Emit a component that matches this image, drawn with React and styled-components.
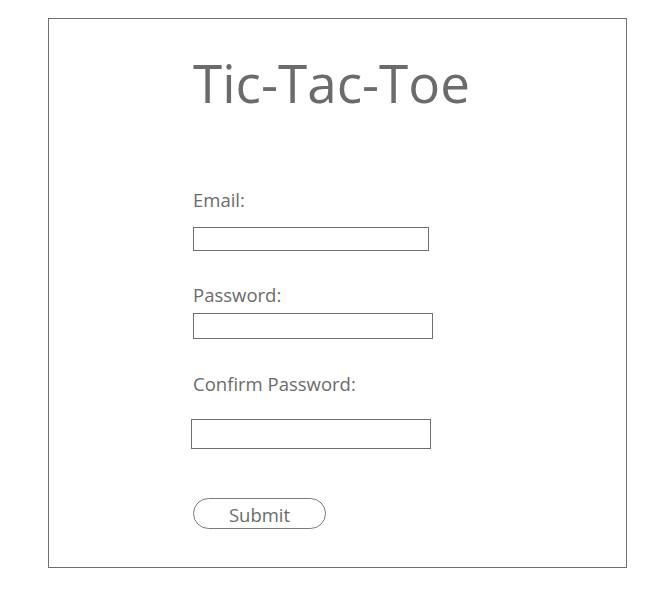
import styled, { createGlobalStyle } from "styled-components";

const GlobalStyle = createGlobalStyle`
  body {
    margin: 0;
    background: #ffffff;
    font-family: "Open Sans", "Noto Sans", sans-serif;
  }
`;

const Frame = styled.div`
  box-sizing: border-box;
  width: 579px;
  height: 550px;
  margin: 18px 0 0 48px;
  border: 1px solid #6f6f6f;
  padding: 33px 0 0 144px;
`;

const Title = styled.h1`
  margin: 0;
  font-size: 53px;
  line-height: 62px;
  font-weight: 400;
  color: #6b6b6b;
`;

const Form = styled.form`
  display: flex;
  flex-direction: column;
  align-items: flex-start;
  margin-top: 74px;
`;

const Label = styled.label`
  display: block;
  font-size: 18.5px;
  line-height: 24px;
  color: #6b6b6b;
  margin-top: ${(p) => p.$top || 0}px;
`;

const Field = styled.input`
  box-sizing: border-box;
  display: block;
  width: ${(p) => p.$w}px;
  height: ${(p) => p.$h}px;
  margin: ${(p) => p.$top}px 0 0 ${(p) => p.$shift || 0}px;
  border: 1px solid #6f6f6f;
  border-radius: 0;
  background: #ffffff;
  padding: 0 4px;
  outline: none;
`;

const SubmitButton = styled.button`
  box-sizing: border-box;
  width: 133px;
  height: 31px;
  margin-top: 49px;
  border: 1px solid #7a7a7a;
  border-radius: 16px;
  background: #ffffff;
  color: #6b6b6b;
  font-family: "Open Sans", "Noto Sans", sans-serif;
  font-size: 18.5px;
  line-height: 27px;
  padding: 2px 0 0;
`;

export default function App() {
  return (
    <>
      <GlobalStyle />
      <Frame>
        <Title>Tic-Tac-Toe</Title>
        <Form onSubmit={(e) => e.preventDefault()}>
          <Label>Email:</Label>
          <Field type="email" $w={236} $h={24} $top={15} />
          <Label $top={32}>Password:</Label>
          <Field type="password" $w={240} $h={26} $top={6} />
          <Label $top={33}>Confirm Password:</Label>
          <Field type="password" $w={240} $h={30} $top={23} $shift={-2} />
          <SubmitButton type="submit">Submit</SubmitButton>
        </Form>
      </Frame>
    </>
  );
}
